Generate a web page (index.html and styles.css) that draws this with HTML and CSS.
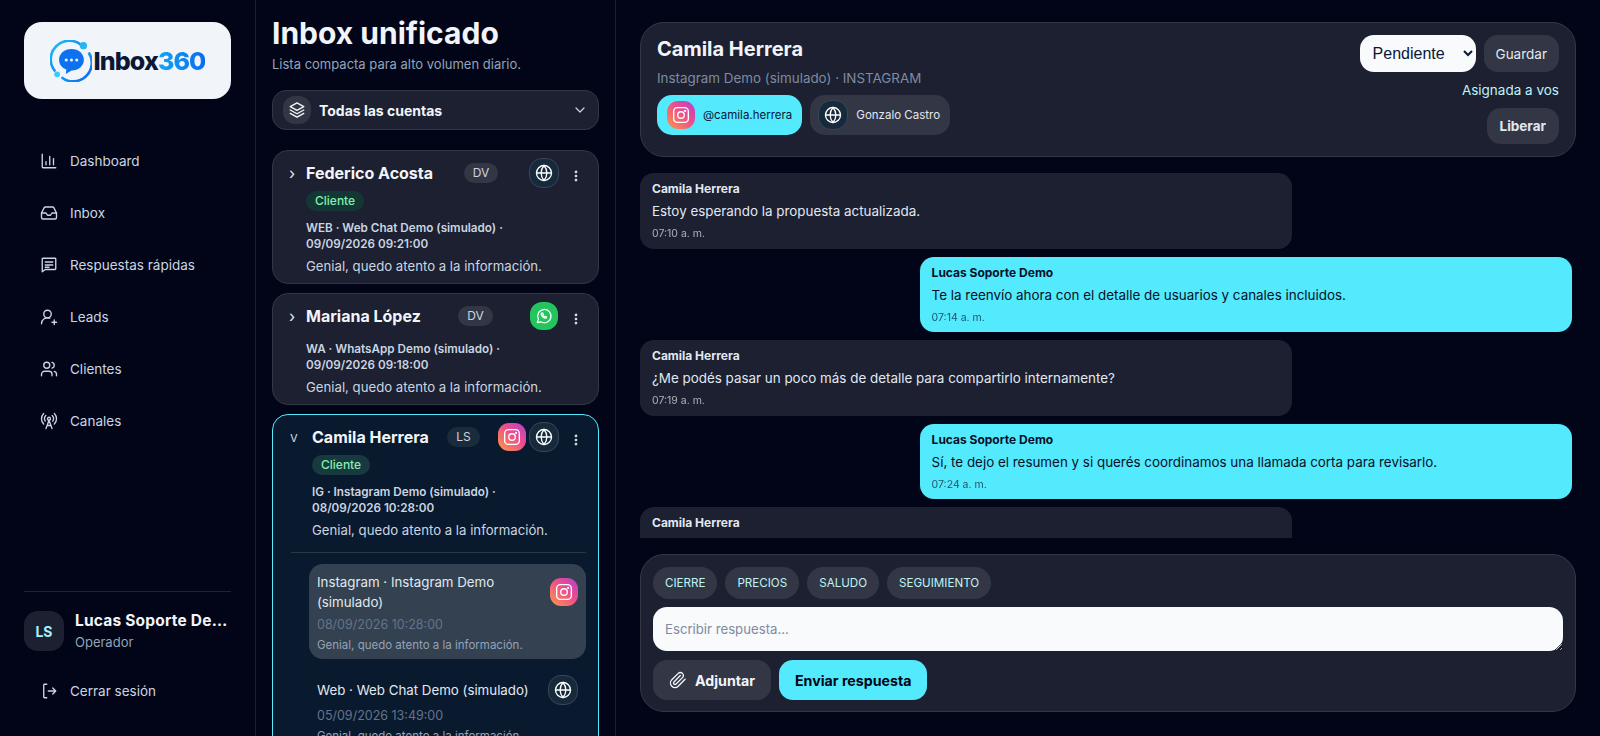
FILE: index.html
```html
<!DOCTYPE html>
<html lang="es">
<head>
    <meta charset="UTF-8">
    <meta name="viewport" content="width=device-width, initial-scale=1.0">
    <title>Inbox360</title>
    <link rel="stylesheet" href="styles.css">
</head>
<body>

<!-- Shared icons -->
<svg class="sprite" width="0" height="0">
    <defs>
        <linearGradient id="ringGrad" x1="0" y1="0" x2="1" y2="1">
            <stop offset="0" stop-color="#21c4f5"/>
            <stop offset="1" stop-color="#0a62ee"/>
        </linearGradient>
    </defs>
    <symbol id="i-chart" viewBox="0 0 24 24"><path d="M3 3v17a1 1 0 0 0 1 1h17M8 17v-4M13 17V6M18 17V9"/></symbol>
    <symbol id="i-inbox" viewBox="0 0 24 24"><path d="M22 12h-6l-2 3h-4l-2-3H2"/><path d="M5.45 5.11 2 12v6a2 2 0 0 0 2 2h16a2 2 0 0 0 2-2v-6l-3.45-6.89A2 2 0 0 0 16.76 4H7.24a2 2 0 0 0-1.79 1.11z"/></symbol>
    <symbol id="i-message" viewBox="0 0 24 24"><path d="M4 3h16a1 1 0 0 1 1 1v13a1 1 0 0 1-1 1H7l-4 3V4a1 1 0 0 1 1-1z"/><path d="M7 8h10M7 12h10M7 15h5"/></symbol>
    <symbol id="i-userplus" viewBox="0 0 24 24"><circle cx="10" cy="8" r="5"/><path d="M2 21a8 8 0 0 1 11-7.4M19 16v6M16 19h6"/></symbol>
    <symbol id="i-users" viewBox="0 0 24 24"><path d="M16 21v-2a4 4 0 0 0-4-4H6a4 4 0 0 0-4 4v2"/><circle cx="9" cy="7" r="4"/><path d="M22 21v-2a4 4 0 0 0-3-3.87M16 3.13a4 4 0 0 1 0 7.75"/></symbol>
    <symbol id="i-radio" viewBox="0 0 24 24"><path d="M4.9 16.1C1 12.2 1 5.8 4.9 1.9M7.8 4.7a6.14 6.14 0 0 0-.8 7.5"/><circle cx="12" cy="9" r="2"/><path d="M16.2 4.8c2 2 2.26 5.11.8 7.47M19.1 1.9a9.96 9.96 0 0 1 0 14.1M9.5 18h5M8 22l4-11 4 11"/></symbol>
    <symbol id="i-logout" viewBox="0 0 24 24"><path d="M9 3H6a1 1 0 0 0-1 1v16a1 1 0 0 0 1 1h3M11 12h10M17 8l4 4-4 4"/></symbol>
    <symbol id="i-layers" viewBox="0 0 24 24"><path d="M12 2.5 3 7.5l9 5 9-5-9-5z"/><path d="M3 12l9 5 9-5M3 16.500l9 5 9-5"/></symbol>
    <symbol id="i-chevron" viewBox="0 0 24 24"><path d="m6 9 6 6 6-6"/></symbol>
    <symbol id="i-globe" viewBox="0 0 24 24"><circle cx="12" cy="12" r="10"/><path d="M2 12h20M12 2a15 15 0 0 1 0 20 15 15 0 0 1 0-20"/></symbol>
    <symbol id="i-dots" viewBox="0 0 24 24"><circle cx="12" cy="5" r="1.400"/><circle cx="12" cy="12" r="1.400"/><circle cx="12" cy="19" r="1.400"/></symbol>
    <symbol id="i-clip" viewBox="0 0 24 24"><path d="m21.44 11.05-9.19 9.19a6 6 0 0 1-8.49-8.49l8.57-8.57A4 4 0 1 1 18 8.840l-8.590 8.570a2 2 0 0 1-2.830-2.830l8.490-8.480"/></symbol>
    <symbol id="i-instagram" viewBox="0 0 24 24"><rect x="4" y="4" width="16" height="16" rx="4"/><circle cx="12" cy="12" r="3.600"/><circle cx="16.500" cy="7.500" r="0.500"/></symbol>
    <symbol id="i-whatsapp" viewBox="0 0 24 24"><path d="M4 20l1.300-4.200A8 8 0 1 1 8.300 19z"/><path d="M9.200 8.500c-.8.700-.7 2 .4 3.600 1.100 1.500 2.500 2.500 3.800 2.500 1 0 1.600-.6 1.700-1.300l-1.800-1-.8.800c-.9-.4-1.600-1.200-2-2l.7-.8-.8-1.900z"/></symbol>
</svg>

<div class="app">

    <!-- Sidebar -->
    <aside class="sidebar">
        <div class="logo-card">
            <svg class="logo-mark" viewBox="0 0 44 44">
                <path d="M33 5.500A19.500 19.500 0 0 0 5.500 33" fill="none" stroke="url(#ringGrad)" stroke-width="2.800"/>
                <path d="M40.500 13A19.500 19.500 0 0 1 12 39" fill="none" stroke="url(#ringGrad)" stroke-width="2.800"/>
                <circle cx="35" cy="6" r="3.800" fill="#21b8f5"/>
                <circle cx="7.500" cy="36" r="3" fill="#37cdf7"/>
                <path d="M22.500 9.500c7.500 0 13 4.800 13 11.300S30 32 22.500 32l-6 3.500.6-4.500C12.500 29.300 9.500 25.500 9.500 20.800 9.500 14.300 15 9.500 22.500 9.500z" fill="#0e72f0"/>
                <circle cx="17" cy="21" r="1.600" fill="#eaf3ff"/>
                <circle cx="22.500" cy="21" r="1.600" fill="#eaf3ff"/>
                <circle cx="28" cy="21" r="1.600" fill="#eaf3ff"/>
            </svg>
            <span class="logo-text">Inbox<span class="logo-num">360</span></span>
        </div>

        <nav class="side-nav">
            <a href="#"><svg class="ico"><use href="#i-chart"/></svg>Dashboard</a>
            <a href="#"><svg class="ico"><use href="#i-inbox"/></svg>Inbox</a>
            <a href="#"><svg class="ico"><use href="#i-message"/></svg>Respuestas rápidas</a>
            <a href="#"><svg class="ico"><use href="#i-userplus"/></svg>Leads</a>
            <a href="#"><svg class="ico"><use href="#i-users"/></svg>Clientes</a>
            <a href="#"><svg class="ico"><use href="#i-radio"/></svg>Canales</a>
        </nav>

        <div class="side-user">
            <div class="avatar">LS</div>
            <div class="side-user-info">
                <div class="side-user-name">Lucas Soporte Demo</div>
                <div class="side-user-role">Operador</div>
            </div>
        </div>
        <a class="logout" href="#"><svg class="ico"><use href="#i-logout"/></svg>Cerrar sesión</a>
    </aside>

    <!-- Conversation list -->
    <section class="list-col">
        <h1>Inbox unificado</h1>
        <p class="list-sub">Lista compacta para alto volumen diario.</p>

        <div class="account-select">
            <span class="account-ico"><svg class="ico"><use href="#i-layers"/></svg></span>
            <span class="account-label">Todas las cuentas</span>
            <svg class="ico account-chev"><use href="#i-chevron"/></svg>
        </div>

        <article class="conv">
            <div class="conv-top">
                <span class="conv-toggle">›</span>
                <div class="conv-head">
                    <span class="conv-name">Federico Acosta</span>
                    <span class="initials">DV</span>
                    <span class="channels">
                        <span class="badge badge-web"><svg class="ico"><use href="#i-globe"/></svg></span>
                    </span>
                </div>
                <svg class="ico conv-more"><use href="#i-dots"/></svg>
            </div>
            <div class="conv-body">
                <span class="tag">Cliente</span>
                <p class="conv-meta">WEB · Web Chat Demo (simulado) · 09/09/2026 09:21:00</p>
                <p class="conv-preview">Genial, quedo atento a la información.</p>
            </div>
        </article>

        <article class="conv">
            <div class="conv-top">
                <span class="conv-toggle">›</span>
                <div class="conv-head">
                    <span class="conv-name">Mariana López</span>
                    <span class="initials">DV</span>
                    <span class="channels">
                        <span class="badge badge-wa"><svg class="ico"><use href="#i-whatsapp"/></svg></span>
                    </span>
                </div>
                <svg class="ico conv-more"><use href="#i-dots"/></svg>
            </div>
            <div class="conv-body">
                <p class="conv-meta">WA · WhatsApp Demo (simulado) · 09/09/2026 09:18:00</p>
                <p class="conv-preview">Genial, quedo atento a la información.</p>
            </div>
        </article>

        <article class="conv conv-open">
            <div class="conv-top">
                <span class="conv-toggle">v</span>
                <div class="conv-head">
                    <span class="conv-name">Camila Herrera</span>
                    <span class="initials">LS</span>
                    <span class="channels">
                        <span class="badge badge-ig"><svg class="ico"><use href="#i-instagram"/></svg></span>
                        <span class="badge badge-web"><svg class="ico"><use href="#i-globe"/></svg></span>
                    </span>
                </div>
                <svg class="ico conv-more"><use href="#i-dots"/></svg>
            </div>
            <div class="conv-body">
                <span class="tag">Cliente</span>
                <p class="conv-meta">IG · Instagram Demo (simulado) · 08/09/2026 10:28:00</p>
                <p class="conv-preview">Genial, quedo atento a la información.</p>
            </div>
            <div class="threads">
                <div class="thread thread-active">
                    <div class="thread-row">
                        <div class="thread-title">Instagram · Instagram Demo (simulado)</div>
                        <span class="badge badge-ig"><svg class="ico"><use href="#i-instagram"/></svg></span>
                    </div>
                    <div class="thread-date">08/09/2026 10:28:00</div>
                    <div class="thread-preview">Genial, quedo atento a la información.</div>
                </div>
                <div class="thread">
                    <div class="thread-row">
                        <div class="thread-title">Web · Web Chat Demo (simulado)</div>
                        <span class="badge badge-web"><svg class="ico"><use href="#i-globe"/></svg></span>
                    </div>
                    <div class="thread-date">05/09/2026 13:49:00</div>
                    <div class="thread-preview">Genial, quedo atento a la información.</div>
                </div>
            </div>
        </article>
    </section>

    <!-- Chat -->
    <main class="chat">
        <header class="chat-head">
            <div class="chat-who">
                <h2>Camila Herrera</h2>
                <p class="chat-sub">Instagram Demo (simulado) · INSTAGRAM</p>
                <div class="chat-chips">
                    <span class="who-chip who-chip-on">
                        <span class="badge badge-ig"><svg class="ico"><use href="#i-instagram"/></svg></span>@camila.herrera
                    </span>
                    <span class="who-chip">
                        <span class="badge badge-web"><svg class="ico"><use href="#i-globe"/></svg></span>Gonzalo Castro
                    </span>
                </div>
            </div>
            <div class="chat-actions">
                <div class="status-row">
                    <select class="status-select">
                        <option>Pendiente</option>
                        <option>Abierta</option>
                        <option>Cerrada</option>
                    </select>
                    <button class="btn">Guardar</button>
                </div>
                <span class="assigned">Asignada a vos</span>
                <button class="btn btn-bold">Liberar</button>
            </div>
        </header>

        <div class="messages">
            <div class="msg">
                <div class="msg-author">Camila Herrera</div>
                <div class="msg-text">Estoy esperando la propuesta actualizada.</div>
                <div class="msg-time">07:10 a. m.</div>
            </div>
            <div class="msg msg-out">
                <div class="msg-author">Lucas Soporte Demo</div>
                <div class="msg-text">Te la reenvío ahora con el detalle de usuarios y canales incluidos.</div>
                <div class="msg-time">07:14 a. m.</div>
            </div>
            <div class="msg">
                <div class="msg-author">Camila Herrera</div>
                <div class="msg-text">¿Me podés pasar un poco más de detalle para compartirlo internamente?</div>
                <div class="msg-time">07:19 a. m.</div>
            </div>
            <div class="msg msg-out">
                <div class="msg-author">Lucas Soporte Demo</div>
                <div class="msg-text">Sí, te dejo el resumen y si querés coordinamos una llamada corta para revisarlo.</div>
                <div class="msg-time">07:24 a. m.</div>
            </div>
            <div class="msg">
                <div class="msg-author">Camila Herrera</div>
            </div>
        </div>

        <div class="composer">
            <div class="quick-row">
                <button class="quick">CIERRE</button>
                <button class="quick">PRECIOS</button>
                <button class="quick">SALUDO</button>
                <button class="quick">SEGUIMIENTO</button>
            </div>
            <textarea class="reply" placeholder="Escribir respuesta..."></textarea>
            <div class="composer-actions">
                <button class="attach"><svg class="ico"><use href="#i-clip"/></svg>Adjuntar</button>
                <button class="send">Enviar respuesta</button>
            </div>
        </div>
    </main>
</div>

</body>
</html>
```

FILE: styles.css
```css
* {
    box-sizing: border-box;
}

html, body {
    height: 100%;
    margin: 0;
}

body {
    background-color: #020518;
    color: #f1f5f9;
    font-family: Inter, "Liberation Sans", sans-serif;
    overflow: hidden;
}

p, h1, h2 {
    margin: 0;
}

button {
    font-family: inherit;
    border: none;
}

.sprite {
    position: absolute;
}

.ico {
    width: 18px;
    height: 18px;
    fill: none;
    stroke: currentColor;
    stroke-width: 1.8;
    stroke-linecap: round;
    stroke-linejoin: round;
    flex-shrink: 0;
}

.app {
    display: flex;
    height: 100vh;
}

/* Sidebar */
.sidebar {
    width: 256px;
    flex-shrink: 0;
    display: flex;
    flex-direction: column;
    padding: 22px 24px 0;
    border-right: 1px solid #1a1e2e;
}

.logo-card {
    height: 77px;
    border-radius: 18px;
    background-color: #f1f5f9;
    display: flex;
    align-items: center;
    justify-content: center;
    gap: 2px;
}

.logo-mark {
    width: 42px;
    height: 42px;
}

.logo-text {
    font-size: 25px;
    font-weight: 800;
    letter-spacing: -0.9px;
    color: #0b1736;
}

.logo-num {
    background: linear-gradient(90deg, #12a5f4, #0a6cf0);
    -webkit-background-clip: text;
    background-clip: text;
    color: transparent;
}

.side-nav {
    margin-top: 36px;
    display: flex;
    flex-direction: column;
    flex-grow: 1;
}

.side-nav a, .logout {
    display: flex;
    align-items: center;
    gap: 12px;
    height: 52px;
    padding-left: 16px;
    font-size: 13.5px;
    color: #cbd5e1;
    text-decoration: none;
}

.side-user {
    display: flex;
    align-items: center;
    gap: 11px;
    padding-top: 18px;
    border-top: 1px solid #1e2231;
}

.avatar {
    width: 40px;
    height: 40px;
    border-radius: 14px;
    background-color: #1c2030;
    color: #a5f3fc;
    display: flex;
    align-items: center;
    justify-content: center;
    font-size: 14px;
    font-weight: 700;
    flex-shrink: 0;
}

.side-user-info {
    min-width: 0;
}

.side-user-name {
    font-size: 15.5px;
    font-weight: 700;
    letter-spacing: 0.2px;
    line-height: 22px;
    white-space: nowrap;
    overflow: hidden;
    text-overflow: ellipsis;
}

.side-user-role {
    font-size: 13px;
    line-height: 20px;
    color: #94a3b8;
}

.logout {
    margin-top: 19px;
    margin-bottom: 25px;
    height: 40px;
}

/* Conversation list */
.list-col {
    width: 360px;
    flex-shrink: 0;
    padding: 14px 16px 0;
    border-right: 1px solid #1a1e2e;
    overflow: hidden;
}

.list-col h1 {
    font-size: 30px;
    font-weight: 700;
    line-height: 38px;
    color: #f1f5f9;
}

.list-sub {
    margin-top: 2px;
    font-size: 13px;
    line-height: 20px;
    color: #94a3b8;
}

.account-select {
    margin-top: 16px;
    height: 40px;
    display: flex;
    align-items: center;
    gap: 8px;
    padding: 0 10px;
    border-radius: 14px;
    background-color: #1c2030;
    border: 1px solid #333745;
}

.account-ico {
    width: 28px;
    height: 28px;
    border-radius: 12px;
    background-color: #333745;
    display: flex;
    align-items: center;
    justify-content: center;
}

.account-label {
    flex-grow: 1;
    font-size: 14px;
    font-weight: 700;
}

.account-chev {
    width: 16px;
    height: 16px;
    color: #cbd5e1;
}

.conv {
    margin-top: 9px;
    padding: 7px 15px 7px 0;
    border-radius: 16px;
    background-color: #1c2030;
    border: 1px solid #333745;
}

.account-select + .conv {
    margin-top: 20px;
}

.conv-top {
    display: flex;
    align-items: center;
    min-height: 30px;
}

.conv-toggle {
    width: 33px;
    padding-left: 16px;
    font-size: 16px;
    line-height: 20px;
    color: #e2e8f0;
    flex-shrink: 0;
}

.conv-head {
    flex-grow: 1;
    display: flex;
    align-items: center;
    justify-content: space-between;
}

.conv-name {
    font-size: 16px;
    font-weight: 700;
    line-height: 24px;
}

.initials {
    padding: 0 9px;
    height: 20px;
    border-radius: 10px;
    background-color: #333745;
    color: #cbd5e1;
    font-size: 12px;
    line-height: 20px;
}

.channels {
    display: flex;
    gap: 3px;
    align-items: center;
}

.badge {
    display: flex;
    align-items: center;
    justify-content: center;
    flex-shrink: 0;
    color: #fff;
}

.badge-web {
    width: 30px;
    height: 30px;
    border-radius: 13px;
    background-color: #172a3c;
    border: 1px solid #39455a;
}

.badge-ig {
    width: 28px;
    height: 28px;
    border-radius: 11px;
    background: linear-gradient(45deg, #fb9a45, #ee4f8a 55%, #b43fd0);
}

.badge-ig .ico {
    width: 22px;
    height: 22px;
    stroke-width: 1.5;
}

.badge-wa {
    width: 28px;
    height: 28px;
    margin-right: 1px;
    border-radius: 12px;
    background-color: #22c55e;
}

.badge-wa .ico {
    width: 20px;
    height: 20px;
    stroke-width: 1.5;
}

.conv-more {
    width: 14px;
    height: 14px;
    margin-left: 10px;
    margin-top: 5px;
    color: #e2e8f0;
}

.conv-body {
    padding-left: 33px;
}

.tag {
    display: inline-block;
    margin-top: 3px;
    height: 20px;
    padding: 0 9px;
    border-radius: 10px;
    background-color: #123734;
    color: #86efac;
    font-size: 12px;
    font-weight: 500;
    line-height: 20px;
}

.conv-meta {
    margin-top: 10px;
    font-size: 11.7px;
    font-weight: 600;
    line-height: 16px;
    color: #cbd5e1;
    padding-right: 30px;
}

.tag + .conv-meta {
    margin-top: 9px;
}

.conv-preview {
    margin-top: 4px;
    font-size: 13.2px;
    line-height: 20px;
    color: #cbd5e1;
}

.conv-open {
    background-color: #0a1a2e;
    border-color: #53eafd;
    padding-bottom: 20px;
}

.conv-open .conv-toggle {
    width: 39px;
    padding-left: 17px;
    font-size: 14px;
    font-weight: 300;
}

.conv-open .conv-body {
    padding-left: 39px;
}

.conv-open .initials {
    background-color: #1a2c3c;
}

.conv-open .tag {
    background-color: #17393f;
}

.threads {
    margin-top: 12px;
    margin-left: 18px;
    margin-right: -3px;
    padding-top: 11px;
    border-top: 1px solid #26384a;
}

.thread {
    margin-left: 18px;
    margin-top: 8px;
    padding: 8px;
    border-radius: 14px;
}

.thread-active {
    margin-top: 0;
    padding-bottom: 5px;
    background-color: #334150;
}

.thread-row {
    display: flex;
    align-items: center;
    justify-content: space-between;
    gap: 8px;
}

.thread-title {
    font-size: 13.3px;
    line-height: 20px;
    color: #e2e8f0;
}

.thread-date {
    margin-top: 2px;
    font-size: 12.5px;
    line-height: 18px;
    color: #64748b;
}

.thread-active .thread-date {
    margin-top: 4px;
}

.thread-preview {
    margin-top: 2px;
    font-size: 11.5px;
    line-height: 18px;
    color: #94a3b8;
}

/* Chat */
.chat {
    flex-grow: 1;
    min-width: 0;
    display: flex;
    flex-direction: column;
    padding: 22px 24px 24px;
}

.chat-head {
    height: 135px;
    flex-shrink: 0;
    display: flex;
    justify-content: space-between;
    padding: 11px 16px 12px;
    border-radius: 24px;
    background-color: #1c2030;
    border: 1px solid #333745;
}

.chat-head h2 {
    font-size: 20px;
    font-weight: 700;
    line-height: 30px;
}

.chat-sub {
    margin-top: 4px;
    font-size: 13.4px;
    line-height: 20px;
    color: #7f8ba0;
}

.chat-chips {
    margin-top: 7px;
    display: flex;
    gap: 8px;
}

.who-chip {
    height: 40px;
    padding: 0 10px 0 8px;
    border-radius: 15px;
    display: flex;
    align-items: center;
    gap: 8px;
    font-size: 11.5px;
    background-color: #333745;
    color: #e2e8f0;
}

.who-chip-on {
    padding-left: 10px;
    background-color: #53eafd;
    color: #0b1736;
}

.chat-actions {
    display: flex;
    flex-direction: column;
    align-items: flex-end;
    padding-top: 1px;
}

.status-row {
    display: flex;
    gap: 8px;
}

.status-select {
    width: 116px;
    height: 37px;
    padding: 0 9px;
    border: none;
    border-radius: 14px;
    background-color: #f8fafc;
    color: #0b1736;
    font-family: "Liberation Sans", sans-serif;
    font-size: 16px;
}

.btn {
    height: 37px;
    padding: 0 12px;
    border-radius: 14px;
    background-color: #333745;
    color: #e2e8f0;
    font-size: 13.5px;
}

.btn-bold {
    height: 36px;
    padding: 0 13px;
    font-weight: 700;
}

.assigned {
    margin: 10px 0 10px;
    font-size: 13.5px;
    line-height: 16px;
    color: #bff3f9;
}

.messages {
    flex-grow: 1;
    min-height: 0;
    margin-top: 16px;
    margin-right: 4px;
    overflow: hidden;
    display: flex;
    flex-direction: column;
    gap: 8px;
}

.msg {
    width: 70%;
    min-height: 75.6px;
    flex-shrink: 0;
    padding: 7px 12px 5.6px;
    border-radius: 14px;
    background-color: #1c2030;
    color: #e2e8f0;
}

.msg-out {
    align-self: flex-end;
    background-color: #53eafd;
    color: #071029;
}

.msg-author {
    font-size: 12px;
    font-weight: 700;
    line-height: 18px;
}

.msg-text {
    margin-top: 3px;
    font-size: 13.4px;
    line-height: 20px;
}

.msg-time {
    margin-top: 4px;
    font-size: 10.5px;
    line-height: 18px;
    opacity: 0.7;
}

.composer {
    height: 158px;
    margin-top: 16px;
    flex-shrink: 0;
    padding: 12px 12px;
    border-radius: 24px;
    background-color: #1c2030;
    border: 1px solid #333745;
}

.quick-row {
    display: flex;
    gap: 8px;
}

.quick {
    height: 32px;
    padding: 0 12px;
    border-radius: 16px;
    background-color: #333745;
    color: #bff3f9;
    font-size: 11.6px;
}

.reply {
    display: block;
    width: 100%;
    height: 44px;
    margin-top: 8px;
    padding: 14px 12px 10px;
    border: none;
    border-radius: 14px;
    background-color: #f8fafc;
    font-family: inherit;
    font-size: 13.2px;
    resize: vertical;
}

.reply::placeholder {
    color: #7f8ba0;
}

.composer-actions {
    margin-top: 9px;
    display: flex;
    gap: 8px;
}

.attach, .send {
    height: 40px;
    padding: 0 16px;
    border-radius: 14px;
    font-size: 14.2px;
    font-weight: 700;
    display: flex;
    align-items: center;
    gap: 8px;
}

.attach {
    background-color: #333745;
    color: #f1f5f9;
}

.send {
    background-color: #53eafd;
    color: #020518;
}
```
